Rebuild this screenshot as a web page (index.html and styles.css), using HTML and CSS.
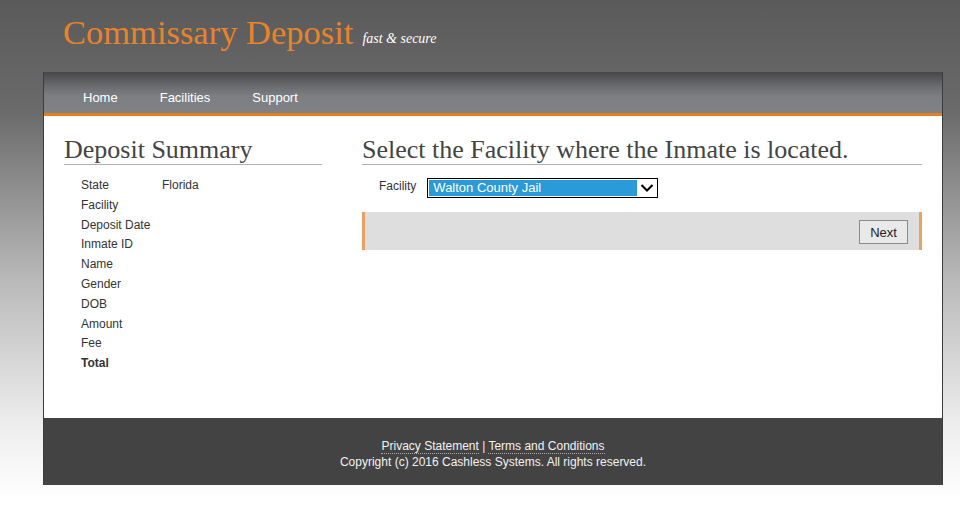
FILE: index.html
```html
<!DOCTYPE html>
<html>
<head>
<meta charset="utf-8">
<link rel="stylesheet" href="styles.css">
</head>
<body>
<div class="site">
  <header class="masthead">
    <span class="brand">Commissary Deposit</span>
    <span class="tagline">fast &amp; secure</span>
  </header>
  <div class="page">
    <nav class="nav">
      <a class="nav-link" href="#">Home</a>
      <a class="nav-link" href="#">Facilities</a>
      <a class="nav-link" href="#">Support</a>
    </nav>
    <main class="content">
      <section class="summary">
        <h2 class="heading">Deposit Summary</h2>
        <dl class="summary-list">
          <div class="row"><dt>State</dt><dd>Florida</dd></div>
          <div class="row"><dt>Facility</dt><dd></dd></div>
          <div class="row"><dt>Deposit Date</dt><dd></dd></div>
          <div class="row"><dt>Inmate ID</dt><dd></dd></div>
          <div class="row"><dt>Name</dt><dd></dd></div>
          <div class="row"><dt>Gender</dt><dd></dd></div>
          <div class="row"><dt>DOB</dt><dd></dd></div>
          <div class="row"><dt>Amount</dt><dd></dd></div>
          <div class="row"><dt>Fee</dt><dd></dd></div>
          <div class="row total"><dt>Total</dt><dd></dd></div>
        </dl>
      </section>
      <section class="step">
        <h2 class="heading">Select the Facility where the Inmate is located.</h2>
        <div class="field">
          <span class="field-label">Facility</span>
          <div class="select">
            <span class="select-value">Walton County Jail</span>
            <span class="select-arrow">
              <svg width="14" height="10" viewBox="0 0 14 10"><path d="M1.5 2 L7 7.5 L12.5 2" fill="none" stroke="#000" stroke-width="2"/></svg>
            </span>
          </div>
        </div>
        <div class="actions">
          <button class="btn">Next</button>
        </div>
      </section>
    </main>
    <footer class="footer">
      <div class="footer-links"><a href="#">Privacy Statement</a> | <a href="#">Terms and Conditions</a></div>
      <div>Copyright (c) 2016 Cashless Systems. All rights reserved.</div>
    </footer>
  </div>
</div>
</body>
</html>
```
FILE: styles.css
```css
html, body {
  margin: 0;
  padding: 0;
}
body {
  min-height: 509px;
  background: linear-gradient(to bottom, #5a5a5a 0px, #6a6a6a 110px, #b9b9b9 280px, #ececec 420px, #ffffff 500px);
  font-family: "Liberation Sans", Arial, sans-serif;
  color: #333;
}
.site {
  padding-left: 43px;
  width: 900px;
}
.masthead {
  height: 72px;
  box-sizing: border-box;
  padding: 13px 0 0 20px;
  display: flex;
  align-items: baseline;
  gap: 9px;
}
.brand {
  font-family: "Liberation Serif", Georgia, serif;
  font-size: 34.5px;
  color: #e8832a;
}
.tagline {
  font-family: "Liberation Serif", Georgia, serif;
  font-style: italic;
  font-size: 14px;
  color: #fff;
  position: relative;
  top: -1px;
}
.page {
  border-left: 1px solid #3c3c3c;
  border-right: 1px solid #3c3c3c;
  background: #fff;
}
.nav {
  box-sizing: border-box;
  background: linear-gradient(to bottom, #46464a 0px, #68696c 13px, #7c7e82 24px, #808286 41px);
  border-bottom: 3px solid #e57e22;
  height: 44px;
  display: flex;
  padding: 18px 0 0 39px;
}
.nav-link {
  color: #fff;
  text-decoration: none;
  font-size: 13px;
  margin-right: 42px;
}
.content {
  display: flex;
  gap: 40px;
  padding: 20px 20px 0 20px;
  height: 302px;
  box-sizing: border-box;
}
.summary {
  width: 258px;
}
.step {
  width: 560px;
}
.heading {
  font-family: "Liberation Serif", Georgia, serif;
  font-weight: normal;
  font-size: 26px;
  color: #444;
  margin: 0;
  padding-bottom: 1px;
  line-height: 27px;
  border-bottom: 1px solid #b0b0b0;
}
.summary-list {
  margin: 11px 0 0 17px;
  font-size: 12px;
}
.row {
  display: flex;
  height: 19.8px;
  line-height: 19.8px;
}
.row dt {
  width: 81px;
  margin: 0;
}
.row dd {
  margin: 0;
}
.row.total {
  font-weight: bold;
}
.field {
  display: flex;
  align-items: center;
  margin: 13px 0 0 17px;
  gap: 11px;
}
.field-label {
  font-size: 12px;
  color: #333;
  position: relative;
  top: -2px;
}
.select {
  width: 231px;
  height: 20px;
  box-sizing: border-box;
  border: 1px solid #000;
  display: flex;
  background: #fff;
}
.select-value {
  flex: 1;
  background: #2a9ad8;
  color: #fff;
  font-size: 13px;
  padding-left: 4px;
  margin: 1px 0 1px 1px;
  line-height: 16px;
}
.select-arrow {
  width: 20px;
  display: flex;
  align-items: center;
  justify-content: center;
}
.actions {
  margin-top: 14px;
  height: 38px;
  box-sizing: border-box;
  background: #dedede;
  border-left: 3px solid #e9a263;
  border-right: 3px solid #e9a263;
  display: flex;
  justify-content: flex-end;
  align-items: center;
  padding-right: 11px;
}
.btn {
  font-family: "Liberation Sans", Arial, sans-serif;
  font-size: 13px;
  color: #222;
  background: #e9e9e9;
  border: 1px solid #8a8a8a;
  width: 49px;
  height: 24px;
  padding: 0;
  margin-top: 2px;
}
.footer {
  background: #434343;
  height: 67px;
  box-sizing: border-box;
  padding-top: 20px;
  text-align: center;
  color: #f2f2f2;
  font-size: 12px;
  line-height: 16px;
}
.footer a {
  color: #f2f2f2;
  text-decoration: none;
  border-bottom: 1px dotted #aaa;
}
```
